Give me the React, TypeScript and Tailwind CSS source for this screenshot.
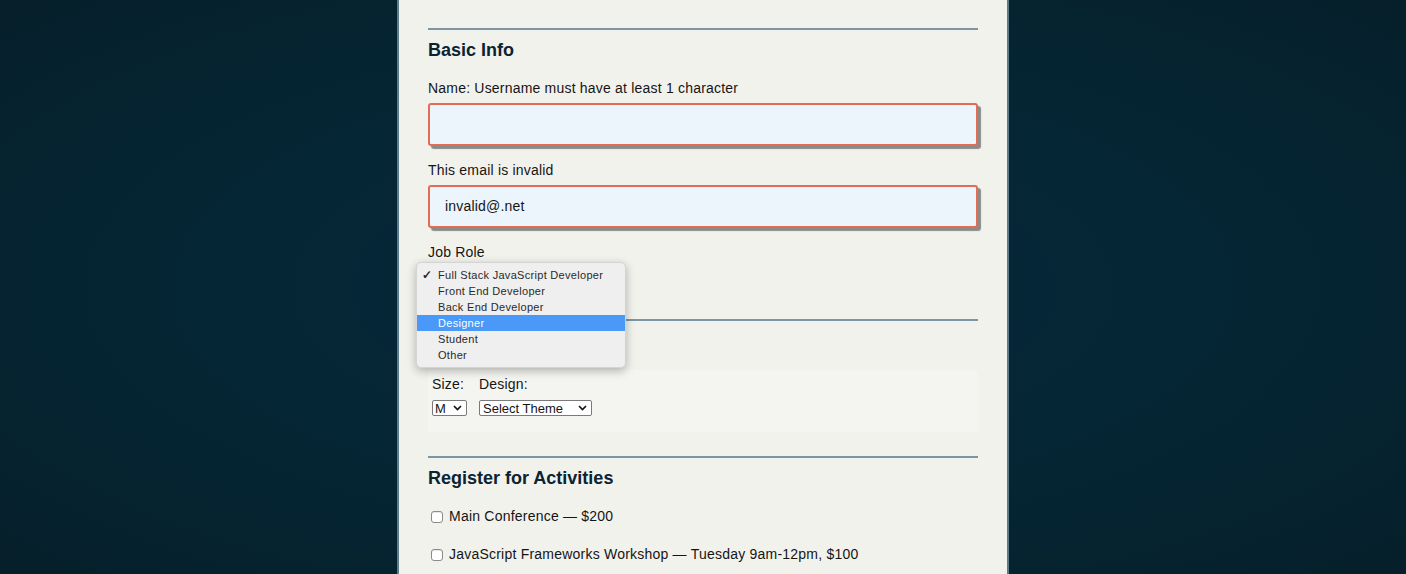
import React from "react";

const Chevron = () => (
  <svg width="9" height="6" viewBox="0 0 9 6" className="shrink-0">
    <path d="M1 1 L4.5 4.5 L8 1" fill="none" stroke="#111" strokeWidth="1.6" />
  </svg>
);

const Checkbox = () => (
  <span className="inline-block w-[12px] h-[12px] rounded-[3px] border border-[#8a8a8a] bg-white shadow-[inset_0_1px_1px_rgba(0,0,0,0.1)]" />
);

export default function App() {
  const roles = [
    "Full Stack JavaScript Developer",
    "Front End Developer",
    "Back End Developer",
    "Designer",
    "Student",
    "Other",
  ];
  return (
    <div
      className="w-full h-[574px] overflow-hidden bg-[radial-gradient(ellipse_at_center,#03293a_0%,#052533_60%,#061f2a_100%)]"
      style={{ fontFamily: '"Liberation Sans", Arial, sans-serif' }}
    >
      <div className="relative mx-auto w-[612px] h-full border-x-2 border-[#5d7b88] bg-[#f2f2ed] px-[29px] pt-[28px] text-[#151515]">
        {/* Basic Info */}
        <div className="h-[2px] bg-[#7b95a2]" />
        <h2 className="mt-[9px] text-[18px] leading-[22px] font-bold text-[#0c2331]">Basic Info</h2>
        <div className="mt-[19px] text-[14px] leading-[17px] tracking-[0.2px]">Name: Username must have at least 1 character</div>
        <div className="mt-[6px] h-[43px] rounded-[3px] border-2 border-[#e36c55] bg-[#ebf5fb] shadow-[3px_3px_1px_#8a8a8a]" />
        <div className="mt-[16px] text-[14px] leading-[17px] tracking-[0.2px]">This email is invalid</div>
        <div className="mt-[6px] h-[43px] rounded-[3px] border-2 border-[#e36c55] bg-[#ebf5fb] shadow-[3px_3px_1px_#8a8a8a] flex items-center pl-[15px] text-[14px] tracking-[0.2px]">
          invalid@.net
        </div>
        <div className="mt-[16px] text-[14px] leading-[17px] tracking-[0.2px]">Job Role</div>
        <div className="mt-[3px] h-[18px] w-[190px]" />

        {/* T-Shirt Info */}
        <div className="mt-[37px] h-[2px] bg-[#7b95a2]" />
        <h2 className="mt-[9px] text-[18px] leading-[22px] font-bold text-[#0c2331]">T-Shirt Info</h2>
        <div className="mt-[18px] h-[62px] bg-[#f4f4f0] px-[4px] pt-[6px]">
          <div className="flex gap-[12px] text-[14px] leading-[17px] tracking-[0.2px]">
            <div className="flex flex-col">
              <span>Size:</span>
              <div className="mt-[7px] h-[16px] w-[35px] border border-[#7a7a7a] rounded-[2px] bg-white flex items-center justify-between pl-[2px] pr-[4px] text-[13px] leading-none tracking-normal">
                <span>M</span>
                <Chevron />
              </div>
            </div>
            <div className="flex flex-col">
              <span>Design:</span>
              <div className="mt-[7px] h-[16px] w-[113px] border border-[#7a7a7a] rounded-[2px] bg-white flex items-center justify-between pl-[3px] pr-[4px] text-[13px] leading-none tracking-normal">
                <span>Select Theme</span>
                <Chevron />
              </div>
            </div>
          </div>
        </div>

        {/* Activities */}
        <div className="mt-[24px] h-[2px] bg-[#7b95a2]" />
        <h2 className="mt-[9px] text-[18px] leading-[22px] font-bold text-[#0c2331]">Register for Activities</h2>
        <div className="mt-[19px] flex flex-col gap-[21px] text-[14px] leading-[17px] tracking-[0.22px]">
          <label className="flex items-center gap-[6px] pl-[3px]">
            <Checkbox />
            <span>Main Conference — $200</span>
          </label>
          <label className="flex items-center gap-[6px] pl-[3px]">
            <Checkbox />
            <span>JavaScript Frameworks Workshop — Tuesday 9am-12pm, $100</span>
          </label>
        </div>

        {/* Dropdown menu overlay */}
        <div className="absolute left-[17px] top-[262px] w-[210px] rounded-[5px] border border-[#d4d4d4] bg-[#efefef] pt-[4px] pb-[4px] shadow-[0_3px_10px_rgba(0,0,0,0.28)]">
          {roles.map((r, i) => (
            <div
              key={r}
              className={
                "relative h-[16px] pl-[21px] text-[11px] leading-[16px] tracking-[0.3px] " +
                (r === "Designer" ? "bg-[#4a99f8] text-white" : "text-[#2a2a2a]")
              }
            >
              {i === 0 && (
                <span className="absolute left-[5px] top-0 text-[12px] font-bold">✓</span>
              )}
              {r}
            </div>
          ))}
        </div>
      </div>
    </div>
  );
}
